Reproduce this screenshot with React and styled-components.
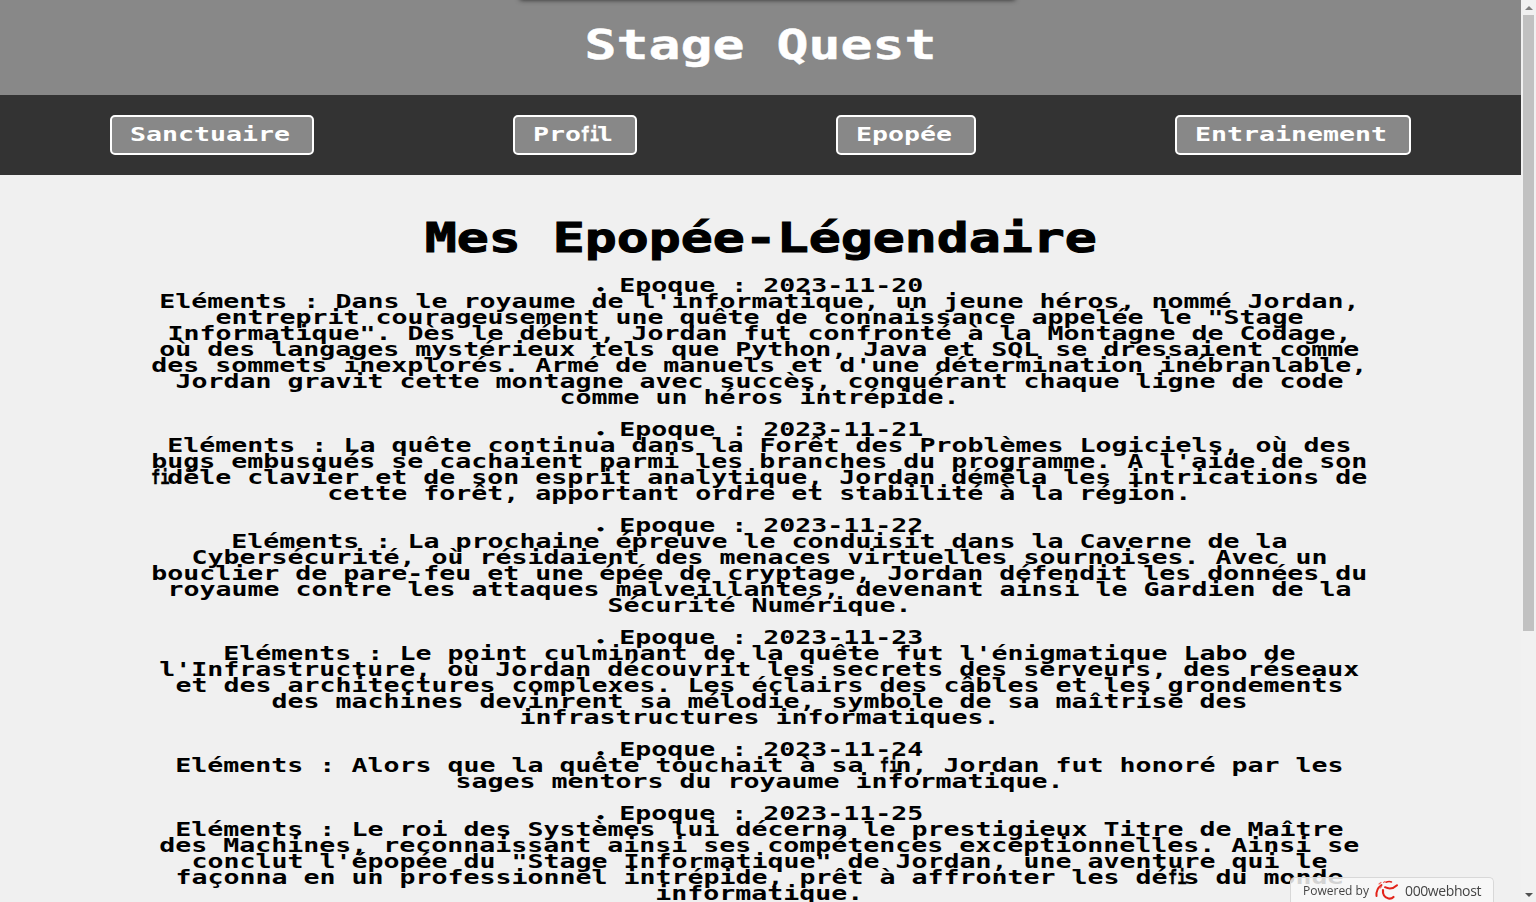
import { createGlobalStyle, styled } from "styled-components";

// stretched mono stands in for the wide pixel font of the page (16px per cell)
const CELL = 16;
const FONT = `"DejaVu Sans Mono", "Liberation Mono", monospace`;
const SCALE = CELL / (19 * 0.60205);

const entries = [
    {
        date: "2023-11-20",
        text: `Dans le royaume de l'informatique, un jeune héros, nommé Jordan, entreprit courageusement une quête de connaissance appelée le "Stage Informatique". Dès le début, Jordan fut confronté à la Montagne de Codage, où des langages mystérieux tels que Python, Java et SQL se dressaient comme des sommets inexplorés. Armé de manuels et d'une détermination inébranlable, Jordan gravit cette montagne avec succès, conquérant chaque ligne de code comme un héros intrépide.`,
    },
    {
        date: "2023-11-21",
        text: `La quête continua dans la Forêt des Problèmes Logiciels, où des bugs embusqués se cachaient parmi les branches du programme. À l'aide de son fidèle clavier et de son esprit analytique, Jordan démêla les intrications de cette forêt, apportant ordre et stabilité à la région.`,
    },
    {
        date: "2023-11-22",
        text: `La prochaine épreuve le conduisit dans la Caverne de la Cybersécurité, où résidaient des menaces virtuelles sournoises. Avec un bouclier de pare-feu et une épée de cryptage, Jordan défendit les données du royaume contre les attaques malveillantes, devenant ainsi le Gardien de la Sécurité Numérique.`,
    },
    {
        date: "2023-11-23",
        text: `Le point culminant de la quête fut l'énigmatique Labo de l'Infrastructure, où Jordan découvrit les secrets des serveurs, des réseaux et des architectures complexes. Les éclairs des câbles et les grondements des machines devinrent sa mélodie, symbole de sa maîtrise des infrastructures informatiques.`,
    },
    {
        date: "2023-11-24",
        text: `Alors que la quête touchait à sa fin, Jordan fut honoré par les sages mentors du royaume informatique.`,
    },
    {
        date: "2023-11-25",
        text: `Le roi des Systèmes lui décerna le prestigieux Titre de Maître des Machines, reconnaissant ainsi ses compétences exceptionnelles. Ainsi se conclut l'épopée du "Stage Informatique" de Jordan, une aventure qui le façonna en un professionnel intrépide, prêt à affronter les défis du monde informatique.`,
    },
];

const links = ["Sanctuaire", "Profil", "Epopée", "Entrainement"];

// the pixel font draws "fi" as one cell
function Cells({ children }) {
    const parts = children.split("fi");
    return parts.map((part, i) => (
        <span key={i}>
            {i > 0 && <Ligature>fi</Ligature>}
            {part}
        </span>
    ));
}

function cellCount(text) {
    return text.replace(/fi/g, "x").length;
}

export default function App() {
    return (
        <Shell>
            <GlobalStyle />
            <Page>
                <TopBanner />
                <Header>
                    <Title $color="#fff">Stage Quest</Title>
                </Header>
                <Nav>
                    {links.map((link) => (
                        <NavButton key={link} $cells={cellCount(link)}>
                            <NavLabel>
                                <Cells>{link}</Cells>
                            </NavLabel>
                        </NavButton>
                    ))}
                </Nav>
                <Main>
                    <Title $color="#000" $heavy>Mes Epopée-Légendaire</Title>
                    <Frame>
                        <EntryList>
                            {entries.map((entry) => (
                                <Entry key={entry.date}>
                                    Epoque : {entry.date}
                                    <br />
                                    Eléments : <Cells>{entry.text}</Cells>
                                </Entry>
                            ))}
                        </EntryList>
                    </Frame>
                </Main>
            </Page>
            <Scrollbar>
                <ScrollArrow $up />
                <ScrollTrack>
                    <ScrollThumb />
                </ScrollTrack>
                <ScrollArrow />
            </Scrollbar>
            <Badge>
                <span>Powered by</span>
                <svg width="25" height="22" viewBox="0 0 25 22" fill="none" stroke="#e2231a" strokeLinecap="round">
                    <path d="M12 3.200c2-.8 3.800-.9 5.500-.2" strokeWidth="1.500" />
                    <path d="M11 8.200c4 2 8.500 1.300 12-2" strokeWidth="2" />
                    <path d="M7.500 6C4 8.500 2 12 2.500 17" strokeWidth="2" />
                    <path d="M9 11c-.5 4 1.500 7.500 5.500 8.500 2 .4 3.800-.3 5-1.500" strokeWidth="2.200" />
                    <path d="M5 5l2-1.500M9.500 3.500L11 2.500M6 9l1.500-1.500" strokeWidth="1.200" stroke="#ee6a62" />
                </svg>
                <BadgeName>000webhost</BadgeName>
            </Badge>
        </Shell>
    );
}

const GlobalStyle = createGlobalStyle`
    html, body {
        height: 100%;
        overflow: hidden;
    }

    body {
        margin: 0;
        background: #f0f0f0;
        font-family: ${FONT};
        color: #000;
    }
`;

const Shell = styled.div`
    display: flex;
    height: 100vh;
    overflow: hidden;
`;

const Page = styled.div`
    position: relative;
    flex: 1;
    min-width: 0;
    overflow: hidden;
`;

const TopBanner = styled.div`
    position: absolute;
    top: -10px;
    left: 520px;
    width: 495px;
    height: 10px;
    background: #444;
    box-shadow: 0 0 5px rgba(0, 0, 0, 0.7);
`;

const Header = styled.header`
    height: 95px;
    padding-top: 29px;
    box-sizing: border-box;
    background: #888;
    text-align: center;
`;

const Title = styled.h1`
    margin: 0;
    font-size: 40px;
    line-height: 32px;
    font-weight: bold;
    color: ${(props) => props.$color};
    -webkit-text-stroke: ${(props) => (props.$heavy ? "1px" : "0.4px")} ${(props) => props.$color};
    transform: scaleX(${CELL * 2 / (40 * 0.60205)});
`;

const Nav = styled.nav`
    height: 80px;
    padding: 0 10px;
    background: #333;
    display: flex;
    justify-content: space-around;
    align-items: center;
`;

const NavButton = styled.a`
    box-sizing: border-box;
    width: ${(props) => props.$cells * CELL + 44}px;
    height: 40px;
    padding: 9px 18px;
    background: #888;
    border: 2px solid #fff;
    border-radius: 5px;
    color: #fff;
    white-space: nowrap;
`;

const NavLabel = styled.div`
    font-size: 19px;
    line-height: 16px;
    font-weight: bold;
    transform: scaleX(${SCALE});
    transform-origin: left center;
`;

const Ligature = styled.span`
    display: inline-block;
    width: 0.602em;
    white-space: nowrap;
    -webkit-text-stroke: 0.4px currentColor;
    transform: scaleX(0.58);
    transform-origin: left center;
`;

const Main = styled.main`
    padding-top: 47px;
    display: flex;
    flex-direction: column;
    align-items: center;
`;

const Frame = styled.div`
    width: 80%;
    margin: 23px 3px 0 0;
`;

const EntryList = styled.ul`
    width: ${100 / SCALE}%;
    margin: 0;
    padding: 0;
    list-style: none;
    text-align: center;
    font-size: 19px;
    line-height: 16px;
    font-weight: bold;
    transform: scaleX(${SCALE});
    transform-origin: left top;
`;

const Entry = styled.li`
    margin-bottom: 16px;

    &::before {
        content: "•";
        display: inline-block;
        box-sizing: border-box;
        width: 19px;
        margin-left: -2px;
        padding-left: 2px;
        text-align: left;
        font-size: 12px;
        line-height: 0;
        transform: translateY(2px);
    }
`;

const Scrollbar = styled.div`
    flex: 0 0 15px;
    display: flex;
    flex-direction: column;
    background: #f1f1f1;
`;

const ScrollArrow = styled.div`
    flex: 0 0 15px;
    display: flex;
    align-items: center;
    justify-content: center;

    &::after {
        content: "";
        border-left: 4px solid transparent;
        border-right: 4px solid transparent;
        border-top: ${(props) => (props.$up ? "0" : "4px solid #505050")};
        border-bottom: ${(props) => (props.$up ? "4px solid #808080" : "0")};
    }
`;

const ScrollTrack = styled.div`
    flex: 1;
    padding: 0 2px;
`;

const ScrollThumb = styled.div`
    height: 616px;
    background: #c1c1c1;
`;

const Badge = styled.div`
    position: fixed;
    right: 42px;
    bottom: 0;
    width: 204px;
    height: 25px;
    box-sizing: border-box;
    padding: 0 12px;
    display: flex;
    align-items: center;
    justify-content: space-between;
    background: rgba(248, 248, 248, 0.85);
    border: 1px solid #d8d8d8;
    border-bottom: 0;
    border-radius: 5px 5px 0 0;
    font-family: "Open Sans", sans-serif;
    font-size: 12px;
    color: #444;
`;

const BadgeName = styled.span`
    font-size: 14px;
    letter-spacing: -0.4px;
`;
